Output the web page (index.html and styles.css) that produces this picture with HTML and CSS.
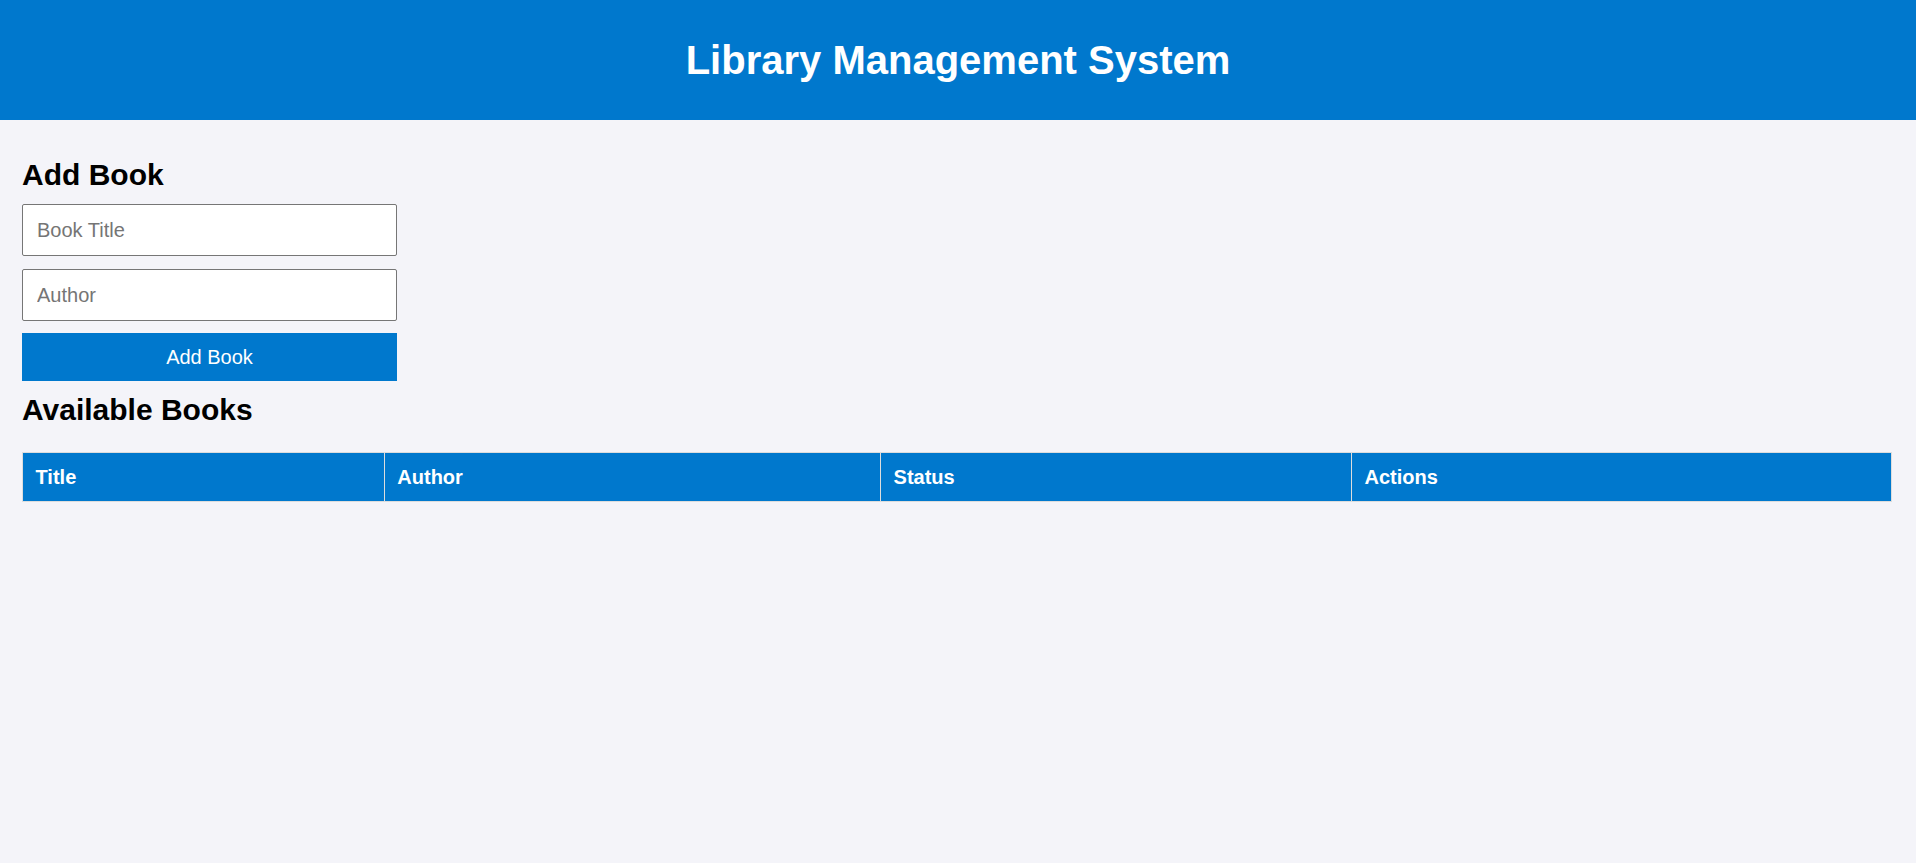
FILE: index.html
```html
<!DOCTYPE html>
<html lang="en">
<head>
<meta charset="utf-8">
<title>Library Management System</title>
<link rel="stylesheet" href="styles.css">
</head>
<body>
<header class="site-header">
  <h1 class="site-title">Library Management System</h1>
</header>
<main class="content">
  <section class="add-book">
    <h2 class="section-title">Add Book</h2>
    <form class="book-form">
      <input class="text-input" type="text" placeholder="Book Title">
      <input class="text-input" type="text" placeholder="Author">
      <button class="primary-btn" type="button">Add Book</button>
    </form>
  </section>
  <section class="books">
    <h2 class="section-title books-title">Available Books</h2>
    <table class="books-table">
      <thead>
        <tr>
          <th class="col-title">Title</th>
          <th class="col-author">Author</th>
          <th class="col-status">Status</th>
          <th class="col-actions">Actions</th>
        </tr>
      </thead>
      <tbody></tbody>
    </table>
  </section>
</main>
</body>
</html>
```

FILE: styles.css
```css
* { box-sizing: border-box; }

html, body {
  margin: 0;
  padding: 0;
}

body {
  background: #f4f4f9;
  font-family: "Liberation Sans", Arial, sans-serif;
  color: #000;
  min-height: 100vh;
}

.site-header {
  background: #0078cd;
  height: 120px;
  display: flex;
  align-items: center;
  justify-content: center;
}

.site-title {
  margin: 0;
  color: #fff;
  font-size: 40px;
  font-weight: bold;
  line-height: 46px;
}

.content {
  padding: 37px 24px 0 22px;
}

.section-title {
  margin: 0 0 12px;
  font-size: 30px;
  font-weight: bold;
  line-height: 35px;
}

.book-form {
  display: flex;
  flex-direction: column;
  width: 375px;
  gap: 13px;
}

.text-input {
  height: 52px;
  width: 375px;
  padding: 0 14px;
  border: 1px solid #767676;
  border-radius: 2px;
  background: #fff;
  font-family: "Liberation Sans", Arial, sans-serif;
  font-size: 20px;
  color: #000;
}

.text-input::placeholder {
  color: #757575;
}

.primary-btn {
  margin-top: -1px;
  height: 48px;
  width: 375px;
  border: none;
  background: #0078cd;
  color: #fff;
  font-family: "Liberation Sans", Arial, sans-serif;
  font-size: 20px;
  padding: 0;
}

.books-title {
  margin-top: 11px;
  margin-bottom: 25px;
}

.books-table {
  width: 100%;
  border-collapse: collapse;
  table-layout: fixed;
}

.books-table th {
  background: #0078cd;
  color: #fff;
  border: 1px solid #ddd;
  text-align: left;
  font-size: 20px;
  font-weight: bold;
  padding: 12.5px 12.5px;
  line-height: 23px;
  height: 49px;
}

.col-title { width: 19.36%; }
.col-author { width: 26.55%; }
.col-status { width: 25.2%; }
.col-actions { width: 28.89%; }
```
